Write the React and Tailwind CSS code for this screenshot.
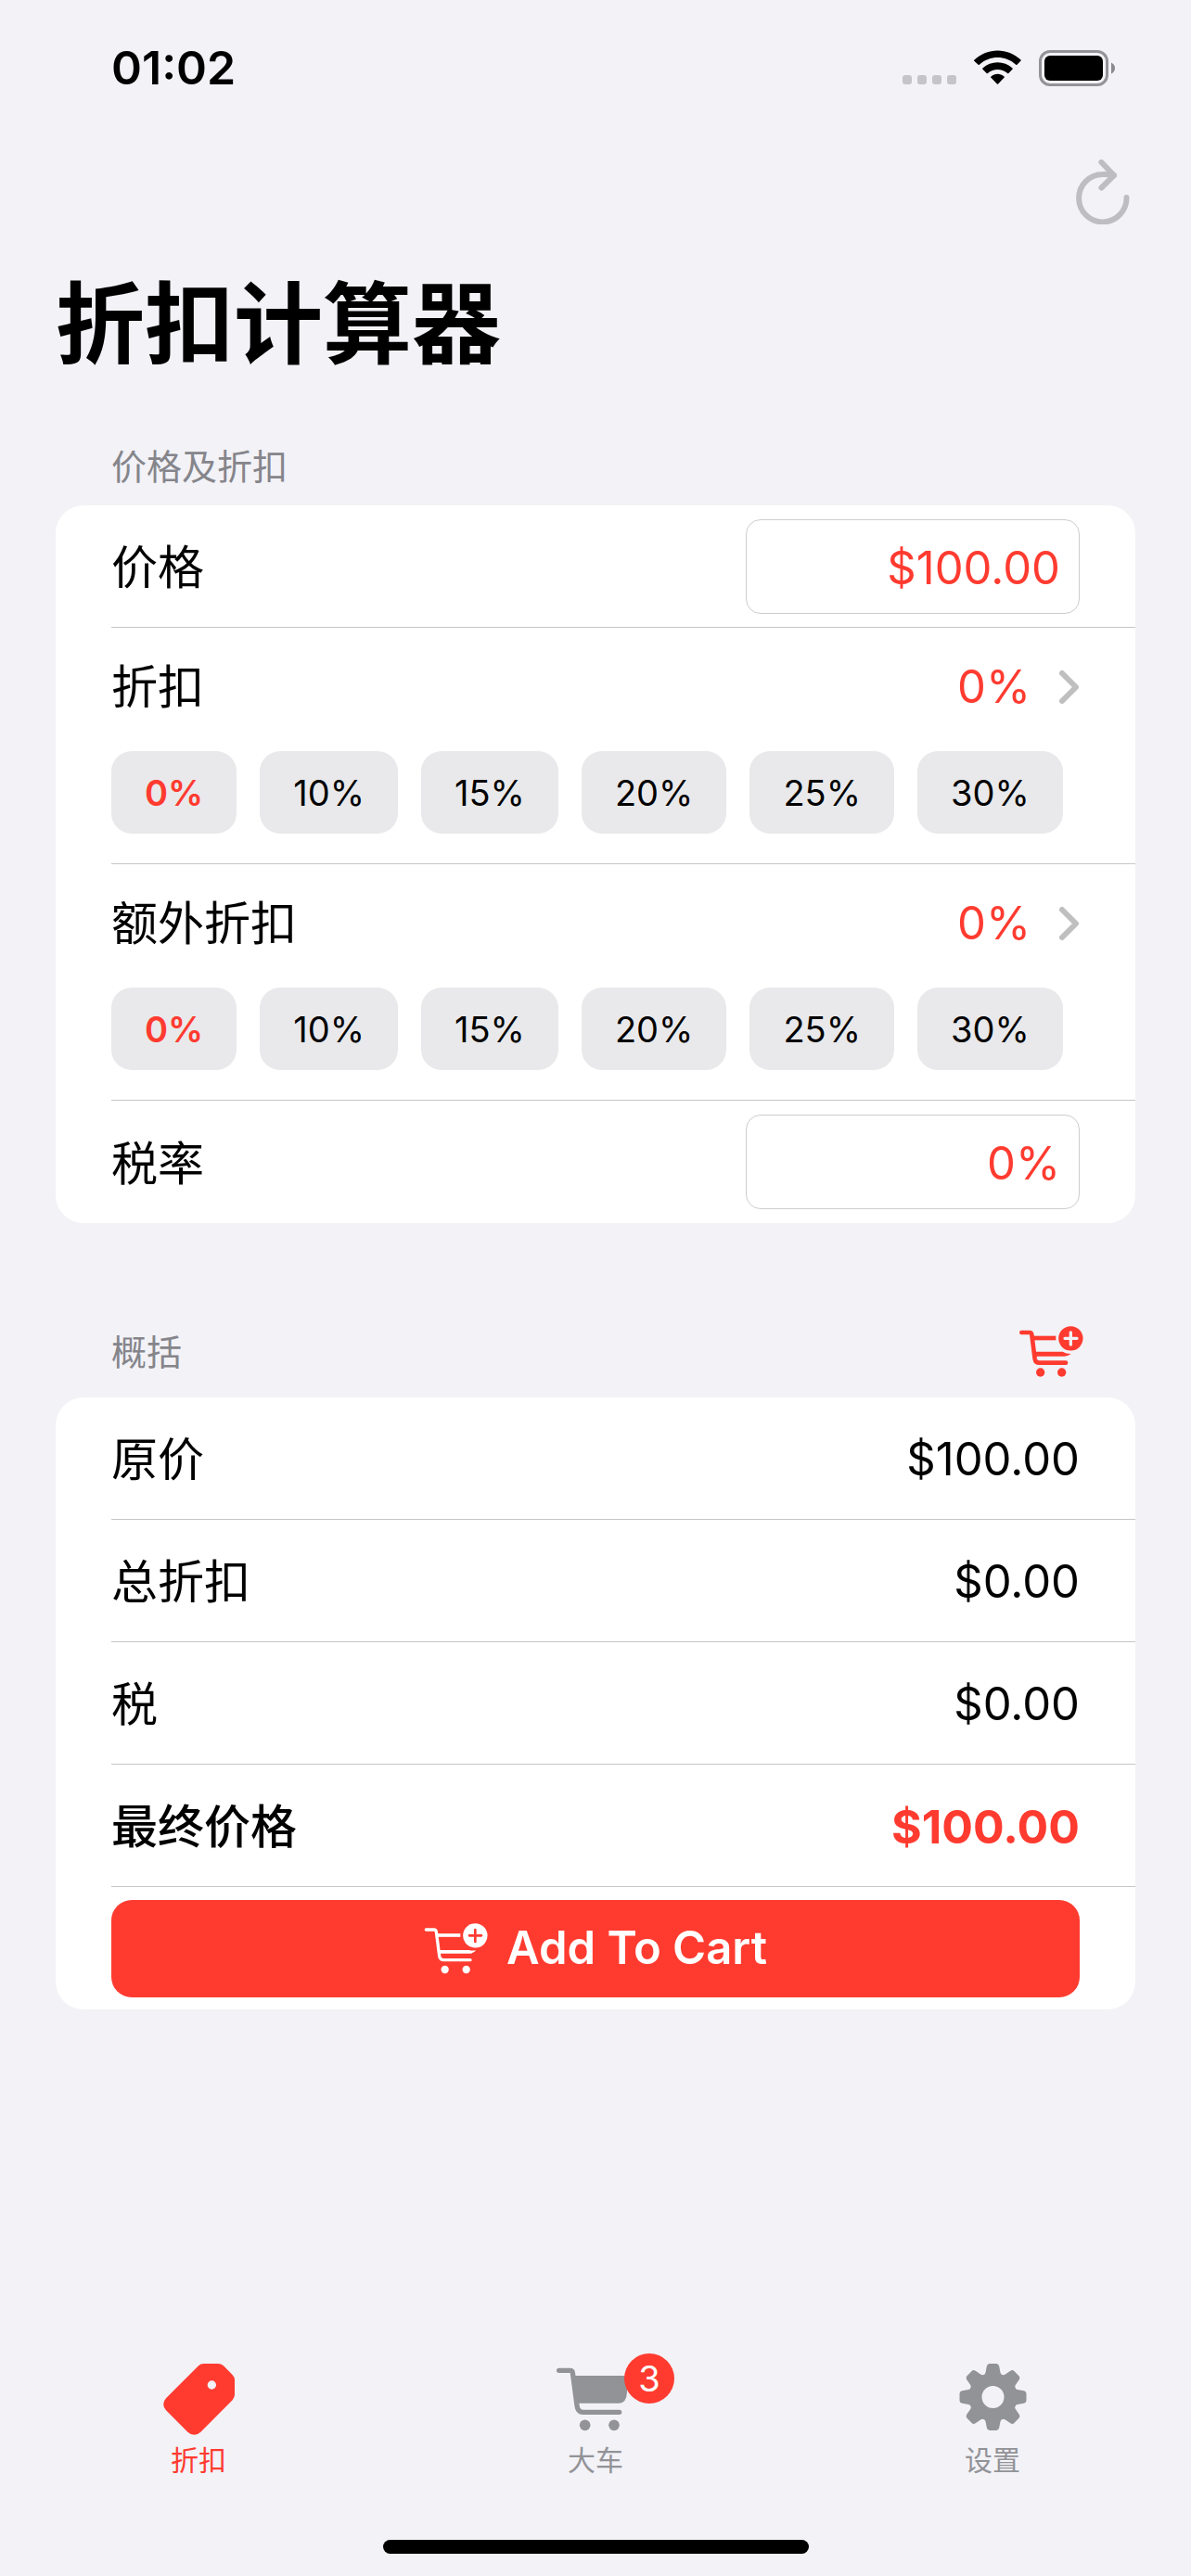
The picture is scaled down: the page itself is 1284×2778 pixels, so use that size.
import { useState } from 'react';
import clsx from 'clsx';

const RATES = [0, 10, 15, 20, 25, 30];

const toNumber = (text) => Number(text.replace(/[^0-9.]/g, '')) || 0;
const money = (value) => `$${value.toFixed(2)}`;

function SignalDots() {
  return (
    <div className="flex gap-[6px] pt-[27px]">
      {[0, 1, 2, 3].map((dot) => (
        <span key={dot} className="size-[10px] rounded-[3px] bg-[#c4c4c9]" />
      ))}
    </div>
  );
}

function WifiIcon() {
  return (
    <svg width="51" height="38" viewBox="0 0 51 38" aria-hidden="true">
      <path d="M0 11.6Q-.1 11 .5 10.5C14.500-3 36.500-3 50.500 10.500Q51 11 50.600 11.600L46.400 15.800Q45.800 16.300 45.200 15.800C34 5.500 17 5.500 5.800 15.800Q5.200 16.300 4.600 15.800Z" />
      <path d="M9.200 20.600Q9 20.200 9.400 19.600C18.300 11.200 32.700 11.200 41.500 19.600Q42 20.200 41.700 20.600L37.300 25Q36.800 25.400 36.200 25C30 19.500 21 19.500 14.800 25Q14.200 25.400 13.700 25Z" />
      <path d="M18.200 29.500Q17.900 29 18.500 28.400C22.500 25 28.500 25 32.500 28.400Q33 29 32.700 29.500L26.100 36.500Q25.500 37 24.900 36.500Z" />
    </svg>
  );
}

function BatteryIcon() {
  return (
    <svg width="82" height="39" viewBox="0 0 82 39" aria-hidden="true">
      <rect x="1.500" y="1.500" width="72" height="36" rx="10.500" fill="none" stroke="#949498" strokeWidth="3" />
      <rect x="6" y="6" width="63" height="27" rx="6" />
      <path d="M78 13.500Q82 15.500 82 19.500T78 25.500Z" fill="#8a8a8e" />
    </svg>
  );
}

function ResetIcon() {
  return (
    <svg width="58" height="70" viewBox="0 0 58 70" fill="none" stroke="#bdbdc2" strokeWidth="6" strokeLinecap="round" strokeLinejoin="round" aria-hidden="true">
      <path d="M54.500 41A25.700 25.700 0 1 1 28.700 16Q35 15.800 41 17.200" />
      <path d="M27.400 3L41 17.200L27.400 30.500" />
    </svg>
  );
}

function ChevronIcon() {
  return (
    <svg width="22" height="38" viewBox="0 0 22 38" fill="none" stroke="#bfbfbf" strokeWidth="6" strokeLinecap="round" strokeLinejoin="round" aria-hidden="true">
      <path d="M3 4L18 19L3 34" />
    </svg>
  );
}

function CartPlusIcon({ thin, plusClass }) {
  const line = thin ? 10 : 14;
  return (
    <svg width="69" height="55" viewBox="116 91 207 165" fill="currentColor" aria-hidden="true">
      <path d="M123 112H149Q155 112 156 119L166 197Q168 210 180 210H266" fill="none" stroke="currentColor" strokeWidth={line} strokeLinecap="round" strokeLinejoin="round" />
      <path d="M160 130H234" stroke="currentColor" strokeWidth={thin ? 11 : 14} />
      {thin ? (
        <path d="M166 178H262Q270 181 284 179Q279 188 266 189H166Z" />
      ) : (
        <path d="M166 174H256Q266 181 283 181Q275 188 262 189H168Z" />
      )}
      <circle cx="282" cy="131" r="39.500" />
      <path d="M263 131H302M282 112V151" className={plusClass} strokeWidth={thin ? 8 : 10} strokeLinecap="round" />
      <circle cx="184" cy="241" r={thin ? 12.5 : 14} />
      <circle cx="253" cy="241" r={thin ? 12.5 : 14} />
    </svg>
  );
}

function TagIcon() {
  return (
    <svg width="77" height="77" viewBox="105 87 231 231" fill="currentColor" fillRule="evenodd" aria-hidden="true">
      <path d="M236 87H282Q292 87 300 94L328 122Q336 130 336 140V186Q336 197 329 205L226 308Q205 327 184 308L114 238Q97 218 114 199L219 94Q226 87 236 87ZM276 156A14 14 0 1 0 248 156A14 14 0 1 0 276 156Z" />
    </svg>
  );
}

function CartIcon() {
  return (
    <svg width="84" height="77" viewBox="60 87 252 231" fill="currentColor" aria-hidden="true">
      <path d="M68 109H104Q111 109 112 116L126 222Q128 243 144 244H263" fill="none" stroke="currentColor" strokeWidth="16" strokeLinecap="round" strokeLinejoin="round" />
      <path d="M112 126H291L288 180Q286 215 262 215H124Z" />
      <circle cx="152" cy="286" r="17.500" />
      <circle cx="246" cy="286" r="17.500" />
    </svg>
  );
}

function GearIcon() {
  return (
    <svg width="77" height="77" viewBox="-115.500 -108 231 231" aria-hidden="true">
      <circle r="57" fill="none" stroke="currentColor" strokeWidth="42" />
      {[0, 45, 90, 135, 180, 225, 270, 315].map((angle) => (
        <path key={angle} transform={`rotate(${angle})`} d="M-33 -68Q-26 -72 -24 -79L-20 -100Q-18 -108 -11 -108H11Q18 -108 20 -100L24 -79Q26 -72 33 -68Z" fill="currentColor" />
      ))}
    </svg>
  );
}

function FieldRow({ id, label, value, onChange }) {
  return (
    <div className="flex h-[132px] items-center justify-between border-b border-[#c6c6c8] pr-[60px] last:border-b-0">
      <label htmlFor={id} className="pt-[3px]">{label}</label>
      <input
        id={id}
        type="text"
        value={value}
        onChange={(e) => onChange(e.target.value)}
        className="h-[102px] w-[360px] rounded-[16px] border border-[#cdcdcf] bg-white px-5 pt-[3px] text-right text-[49px] text-[#ff3b30] outline-none"
      />
    </div>
  );
}

function RateRow({ label, value, onChange }) {
  return (
    <div className="border-b border-[#c6c6c8] pt-[34px] pb-8">
      <button type="button" className="flex w-full items-center justify-between pr-[60px]">
        <span>{label}</span>
        <span className="flex items-center gap-[31px] text-[49px] text-[#ff3b30]">
          {value}%
          <ChevronIcon />
        </span>
      </button>
      <div className="mt-[39px] flex gap-[25px]">
        {RATES.map((rate) => (
          <button
            key={rate}
            type="button"
            onClick={() => onChange(rate)}
            className={clsx(
              'h-[89px] rounded-[22px] bg-[#e9e9eb] px-9 text-[38px] leading-[48px]',
              rate === value && 'font-semibold text-[#ff3b30]'
            )}
          >
            {rate}%
          </button>
        ))}
      </div>
    </div>
  );
}

function SummaryRow({ label, value, total }) {
  return (
    <div className="flex h-[132px] items-center justify-between border-b border-[#c6c6c8] pt-[3px] pr-[60px]">
      <span className={clsx(total && 'font-medium')}>{label}</span>
      <span className={clsx(total ? 'font-bold text-[#ff3b30]' : 'text-[49px]')}>{value}</span>
    </div>
  );
}

function Tab({ label, active, badge, children }) {
  return (
    <a href="#" className={clsx('flex flex-1 flex-col items-center gap-[7px]', active ? 'text-[#ff3b30]' : 'text-[#929397]')}>
      <span className="relative">
        {children}
        {badge && (
          <span className="absolute -top-[11px] left-[73px] flex size-[54px] items-center justify-center rounded-full bg-[#ff3b30] text-[38px] leading-[48px] text-white">
            {badge}
          </span>
        )}
      </span>
      <span className="text-[30px] leading-[40px]">{label}</span>
    </a>
  );
}

export default function App() {
  const [price, setPrice] = useState('$100.00');
  const [tax, setTax] = useState('0%');
  const [discount, setDiscount] = useState(0);
  const [extra, setExtra] = useState(0);

  const base = toNumber(price);
  const discounted = base * (1 - discount / 100) * (1 - extra / 100);
  const taxAmount = (discounted * toNumber(tax)) / 100;

  return (
    <div className="flex min-h-screen flex-col bg-[#f2f2f7] font-[Inter,'Noto_Sans_CJK_SC',sans-serif] text-[50px] leading-[60px] text-black">
      <div className="flex items-start justify-between pt-[43px] pr-[82px] pb-[38px] pl-[120px]">
        <span className="font-semibold">01:02</span>
        <div className="flex items-start gap-[19px] pt-[11px]">
          <SignalDots />
          <WifiIcon />
          <BatteryIcon />
        </div>
      </div>

      <header>
        <div className="flex h-[132px] items-center justify-end pr-[66px]">
          <button type="button" aria-label="重置">
            <ResetIcon />
          </button>
        </div>
        <h1 className="mt-4 px-[60px] text-[96px] leading-[120px] font-bold">折扣计算器</h1>
      </header>

      <main className="px-[60px]">
        <section className="pt-[70px]">
          <h2 className="mb-[18px] px-[60px] text-[38px] leading-[48px] text-[#85858b]">价格及折扣</h2>
          <div className="rounded-[30px] bg-white pl-[60px]">
            <FieldRow id="price" label="价格" value={price} onChange={setPrice} />
            <RateRow label="折扣" value={discount} onChange={setDiscount} />
            <RateRow label="额外折扣" value={extra} onChange={setExtra} />
            <FieldRow id="tax" label="税率" value={tax} onChange={setTax} />
          </div>
        </section>

        <section className="pt-[111px]">
          <div className="mb-[22px] flex items-center justify-between pr-[56px] pl-[60px]">
            <h2 className="text-[38px] leading-[48px] text-[#85858b]">概括</h2>
            <button type="button" aria-label="加入购物车" className="text-[#ff3b30]">
              <CartPlusIcon plusClass="stroke-[#f2f2f7]" />
            </button>
          </div>
          <div className="rounded-[30px] bg-white pl-[60px]">
            <SummaryRow label="原价" value={money(base)} />
            <SummaryRow label="总折扣" value={money(base - discounted)} />
            <SummaryRow label="税" value={money(taxAmount)} />
            <SummaryRow label="最终价格" value={money(discounted + taxAmount)} total />
            <div className="flex h-[132px] items-center pr-[60px]">
              <button type="button" className="flex h-[105px] w-full items-center justify-center gap-5 rounded-[22px] bg-[#ff3b30] text-[49px] font-semibold text-white">
                <CartPlusIcon thin plusClass="stroke-[#ff3b30]" />
                Add To Cart
              </button>
            </div>
          </div>
        </section>
      </main>

      <nav className="mt-auto flex">
        <Tab label="折扣" active>
          <TagIcon />
        </Tab>
        <Tab label="大车" badge="3">
          <CartIcon />
        </Tab>
        <Tab label="设置">
          <GearIcon />
        </Tab>
      </nav>
      <div className="mx-auto mt-[66px] mb-6 h-[15px] w-[459px] rounded-full bg-black" />
    </div>
  );
}
